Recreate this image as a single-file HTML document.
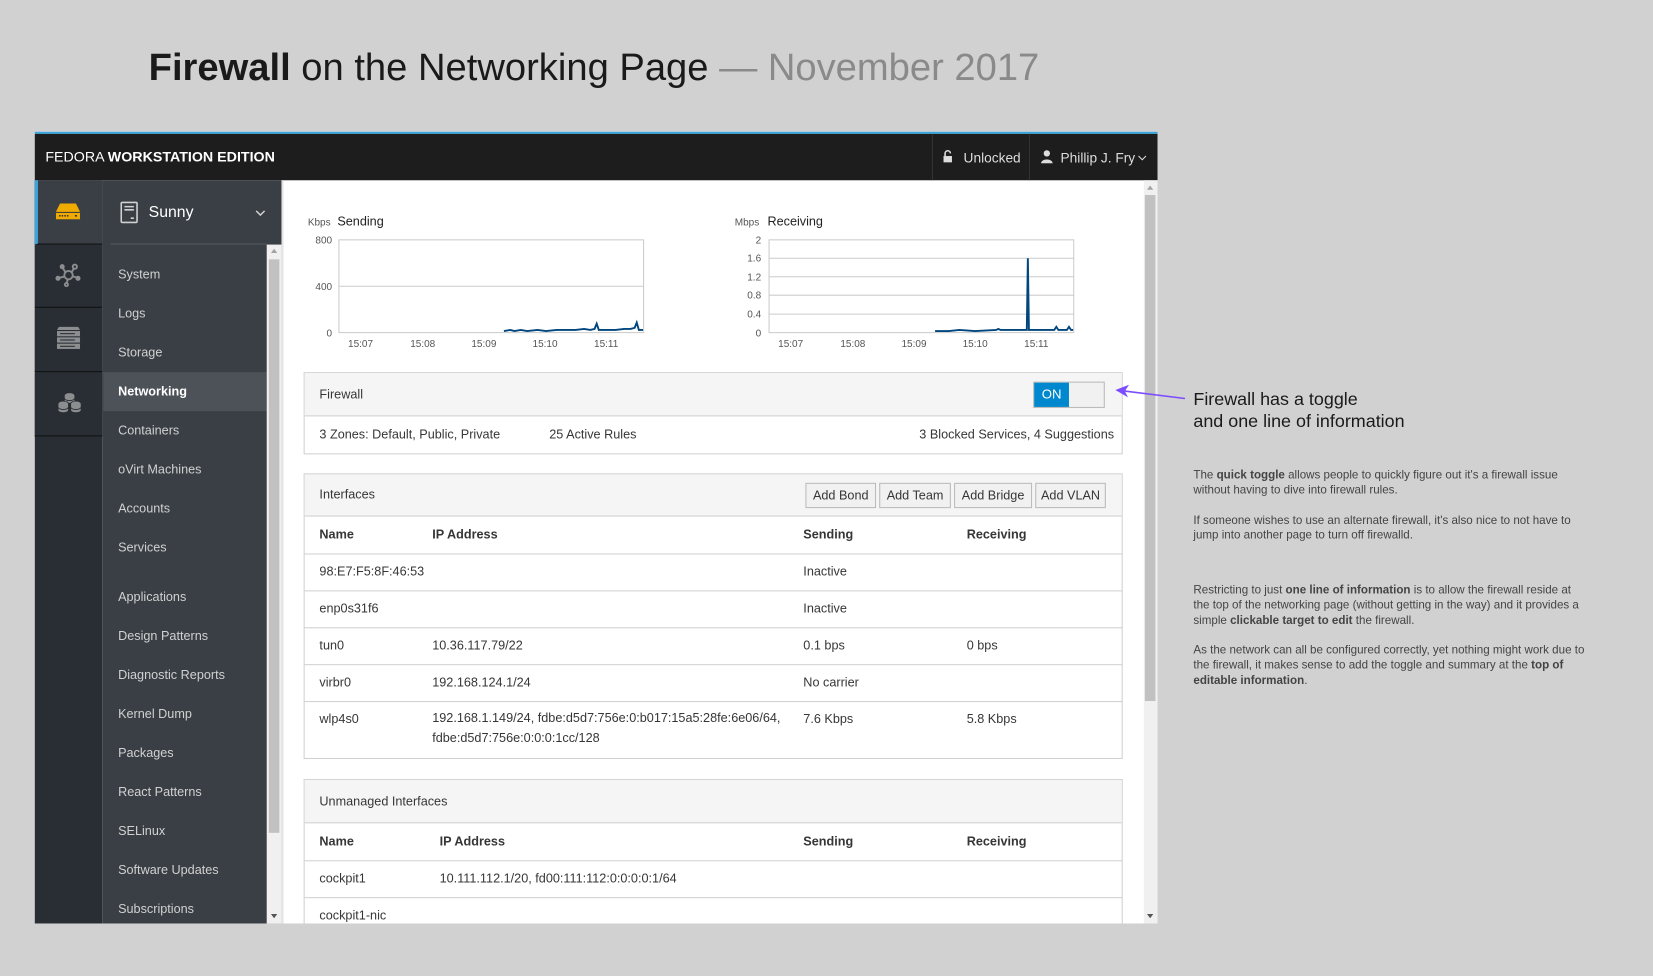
<!DOCTYPE html>
<html><head><meta charset="utf-8"><style>
*{box-sizing:border-box;margin:0;padding:0}
html,body{width:1653px;height:976px;overflow:hidden;background:#d1d1d1;font-family:"Liberation Sans",sans-serif}
#w{position:absolute;left:0;top:0;width:1568px;height:926px;transform:scale(1.05421);transform-origin:0 0}
.a{position:absolute}
.t{position:absolute;font-size:12px;color:#363636;white-space:nowrap}
.nav{position:absolute;left:112px;font-size:12px;color:#d1d1d1}
.ico{position:absolute;left:33px;width:64px;height:60px;background:#292e34;border-bottom:1px solid #111}
.row{position:absolute;left:288px;width:777px;border-top:1px solid #d1d1d1}
.btn{position:absolute;top:458px;height:24px;border:1px solid #bbb;background:#f1f1f1;font-size:12px;color:#363636;text-align:center;line-height:22px}
.p{font-size:11px;color:#444;line-height:14.3px;margin-bottom:14px}
</style></head><body><div id="w">
<div class="a" style="left:141px;top:43px;font-size:36.2px;color:#1a1a1a;white-space:nowrap"><b>Firewall</b> on the Networking Page <span style="color:#8a8a8a">— November 2017</span></div>

<div class="a" style="left:33px;top:125px;width:1065px;height:751px;background:#fff;overflow:hidden"></div>
<div class="a" style="left:33px;top:125px;width:1065px;height:2px;background:#39a5dc"></div>
<div class="a" style="left:33px;top:127px;width:1065px;height:44px;background:#1d1d1d"></div>
<div class="a" style="left:43px;top:141px;font-size:13.5px;color:#fff;white-space:nowrap">FEDORA <b>WORKSTATION EDITION</b></div>
<div class="a" style="left:884px;top:127px;width:1px;height:44px;background:#333"></div>
<div class="a" style="left:976px;top:127px;width:1px;height:44px;background:#333"></div>
<svg class="a" style="left:894px;top:142px" width="10" height="13"><rect x="1" y="6" width="8" height="6" fill="#ddd"/><path d="M2.5 6V3.5a2.5 2.5 0 0 1 5 0" stroke="#ddd" stroke-width="1.5" fill="none"/></svg>
<div class="a" style="left:914px;top:142px;font-size:13px;color:#ddd">Unlocked</div>
<svg class="a" style="left:987px;top:142px" width="12" height="13"><circle cx="6" cy="3.5" r="3" fill="#ddd"/><path d="M0.5 13c0-5 11-5 11 0z" fill="#ddd"/></svg>
<div class="a" style="left:1006px;top:142px;font-size:13px;color:#ddd">Phillip J. Fry</div>
<svg class="a" style="left:1079px;top:147px" width="9" height="6"><path d="M1 1l3.5 3.5L8 1" stroke="#ddd" fill="none"/></svg>

<div class="a" style="left:33px;top:171px;width:64px;height:705px;background:#292e34"></div>
<div class="ico" style="top:171px;background:#393f44;border-left:3px solid #39a5dc;height:61px"></div>
<svg class="a" style="left:53px;top:193px" width="23" height="16"><path d="M4 0h15l4 8H0z" fill="#f0ab00"/><rect x="0" y="9" width="23" height="6" fill="#f0ab00"/><g fill="#292e34"><rect x="3" y="11" width="1.4" height="1.4"/><rect x="5.5" y="11" width="1.4" height="1.4"/><rect x="8" y="11" width="1.4" height="1.4"/><rect x="10.5" y="11" width="1.4" height="1.4"/><rect x="18" y="11" width="2" height="1.4"/></g></svg>
<div class="ico" style="top:232px"></div>
<svg class="a" style="left:52px;top:249px" width="26" height="24" fill="none" stroke="#8b8d8f" stroke-width="1.8"><circle cx="13" cy="12" r="4"/><circle cx="19" cy="4" r="2"/><circle cx="7" cy="4" r="1.5" fill="#8b8d8f"/><circle cx="3" cy="15" r="1.5" fill="#8b8d8f"/><circle cx="22" cy="15" r="1.5" fill="#8b8d8f"/><circle cx="11" cy="21" r="1.5"/><path d="M16 9l2-3M10 9L8 6M9 13.5l-5 1M17 13l4 1.5M12 16l-0.5 3.5"/></svg>
<div class="ico" style="top:293px"></div>
<svg class="a" style="left:54px;top:310px" width="22" height="22"><path d="M2 0h18l2 3H0z" fill="#8b8d8f"/><g fill="#8b8d8f"><rect y="4" width="22" height="5"/><rect y="10" width="22" height="5"/><rect y="16" width="22" height="5"/></g><g fill="#292e34"><rect x="3" y="6" width="14" height="1"/><rect x="3" y="12" width="14" height="1"/><rect x="3" y="18" width="14" height="1"/></g></svg>
<div class="ico" style="top:354px"></div>
<svg class="a" style="left:53px;top:372px" width="26" height="22" fill="#8b8d8f" stroke="#292e34" stroke-width="0.8"><path d="M8 3a5 2.5 0 0 1 10 0v5a5 2.5 0 0 1-10 0z"/><path d="M2 11a5 2.5 0 0 1 10 0v6a5 2.5 0 0 1-10 0z"/><path d="M14 11a5 2.5 0 0 1 10 0v6a5 2.5 0 0 1-10 0z"/><path d="M8 5.5a5 2.5 0 0 0 10 0M2 14a5 2.5 0 0 0 10 0M14 14a5 2.5 0 0 0 10 0" fill="none"/></svg>

<div class="a" style="left:97px;top:171px;width:171px;height:705px;background:#393f44"></div>
<svg class="a" style="left:114px;top:191px" width="18" height="22" fill="none" stroke="#d1d1d1" stroke-width="1.5"><rect x="1" y="1" width="15" height="19" rx="1"/><path d="M4 5h9M4 8h9M10 16h3"/></svg>
<div class="a" style="left:141px;top:193px;font-size:15px;color:#fff">Sunny</div>
<svg class="a" style="left:242px;top:199px" width="10" height="7"><path d="M1 1l4 4 4-4" stroke="#d1d1d1" stroke-width="1.4" fill="none"/></svg>
<div class="a" style="left:105px;top:231px;width:148px;height:1px;background:#555a5f"></div>
<div class="a" style="left:98px;top:353px;width:155px;height:37px;background:#4d5258"></div>
<div class="nav" style="top:253px">System</div>
<div class="nav" style="top:290px">Logs</div>
<div class="nav" style="top:327px">Storage</div>
<div class="nav" style="top:364px;color:#fff;font-weight:bold">Networking</div>
<div class="nav" style="top:401px">Containers</div>
<div class="nav" style="top:438px">oVirt Machines</div>
<div class="nav" style="top:475px">Accounts</div>
<div class="nav" style="top:512px">Services</div>
<div class="nav" style="top:559px">Applications</div>
<div class="nav" style="top:596px">Design Patterns</div>
<div class="nav" style="top:633px">Diagnostic Reports</div>
<div class="nav" style="top:670px">Kernel Dump</div>
<div class="nav" style="top:707px">Packages</div>
<div class="nav" style="top:744px">React Patterns</div>
<div class="nav" style="top:781px">SELinux</div>
<div class="nav" style="top:818px">Software Updates</div>
<div class="nav" style="top:855px">Subscriptions</div>
<div class="a" style="left:253px;top:232px;width:14px;height:644px;background:#f0f0f0"></div>
<div class="a" style="left:255px;top:246px;width:10px;height:544px;background:#c1c1c1"></div>
<div class="a" style="left:257px;top:236px;width:0;height:0;border:3px solid transparent;border-bottom:4px solid #a3a3a3;border-top:0"></div>
<div class="a" style="left:257px;top:867px;width:0;height:0;border:3px solid transparent;border-top:4px solid #555;border-bottom:0"></div>
<div class="a" style="left:267px;top:171px;width:2px;height:705px;background:#e5e5e5"></div>

<div class="a" style="left:1085px;top:171px;width:13px;height:705px;background:#f0f0f0"></div>
<div class="a" style="left:1086px;top:185px;width:10px;height:480px;background:#c1c1c1"></div>
<div class="a" style="left:1088px;top:176px;border:3px solid transparent;border-bottom:4px solid #a3a3a3;border-top:0"></div>
<div class="a" style="left:1088px;top:867px;border:3px solid transparent;border-top:4px solid #555;border-bottom:0"></div>

<svg class="a" style="left:280px;top:195px" width="800" height="145" font-family="Liberation Sans" font-size="9.5" fill="#555">
<text x="12" y="19" font-size="9.5">Kbps</text><text x="40" y="19" font-size="12" fill="#222">Sending</text>
<rect x="41.5" y="32.5" width="289" height="88" fill="none" stroke="#ccc"/>
<line x1="41" y1="76.5" x2="331" y2="76.5" stroke="#ccc"/>
<text x="35" y="36" text-anchor="end">800</text><text x="35" y="80" text-anchor="end">400</text><text x="35" y="124" text-anchor="end">0</text>
<g text-anchor="middle"><text x="62" y="134">15:07</text><text x="121" y="134">15:08</text><text x="179" y="134">15:09</text><text x="237" y="134">15:10</text><text x="295" y="134">15:11</text></g>
<path d="M198 119L204 118L208 119L214 118L220 119L230 118L238 119L248 118L256 118L266 118L274 117L280 118L284 117L286 112L288 118L294 118L304 118L312 117L318 117L322 116L324 111L326 118L330 118" stroke="#00467f" stroke-width="1.8" fill="none"/>
<text x="417" y="19">Mbps</text><text x="448" y="19" font-size="12" fill="#222">Receiving</text>
<rect x="449.5" y="32.5" width="289" height="88" fill="none" stroke="#ccc"/>
<g stroke="#ccc"><line x1="449" y1="50" x2="739" y2="50"/><line x1="449" y1="67.5" x2="739" y2="67.5"/><line x1="449" y1="85" x2="739" y2="85"/><line x1="449" y1="103" x2="739" y2="103"/></g>
<g text-anchor="end"><text x="442" y="36">2</text><text x="442" y="53">1.6</text><text x="442" y="71">1.2</text><text x="442" y="88">0.8</text><text x="442" y="106">0.4</text><text x="442" y="124">0</text></g>
<g text-anchor="middle"><text x="470" y="134">15:07</text><text x="529" y="134">15:08</text><text x="587" y="134">15:09</text><text x="645" y="134">15:10</text><text x="703" y="134">15:11</text></g>
<path d="M607 119L620 119L630 118L645 119L665 118L667 117L669 118L690 118L694 118L695 50L696 118L705 118L715 118L720 118L722 115L724 118L732 118L734 115L736 118L738 118" stroke="#00467f" stroke-width="1.8" fill="none"/>
</svg>

<div class="a" style="left:288px;top:353px;width:777px;height:78px;border:1px solid #d1d1d1;background:#fff"></div>
<div class="a" style="left:289px;top:354px;width:775px;height:41px;background:#f5f5f5;border-bottom:1px solid #d1d1d1"></div>
<div class="t" style="left:303px;top:367px">Firewall</div>
<div class="a" style="left:980px;top:362px;width:68px;height:25px;border:1px solid #bbb;background:#f1f1f1"></div>
<div class="a" style="left:981px;top:363px;width:33px;height:23px;background:#0088ce;color:#fff;font-size:12.5px;text-align:center;line-height:23px">ON</div>
<div class="t" style="left:303px;top:405px">3 Zones: Default, Public, Private</div>
<div class="t" style="left:521px;top:405px">25 Active Rules</div>
<div class="t" style="left:872px;top:405px">3 Blocked Services, 4 Suggestions</div>

<div class="a" style="left:288px;top:449px;width:777px;height:271px;border:1px solid #d1d1d1;background:#fff"></div>
<div class="a" style="left:289px;top:450px;width:775px;height:40px;background:#f5f5f5;border-bottom:1px solid #d1d1d1"></div>
<div class="t" style="left:303px;top:462px">Interfaces</div>
<div class="btn" style="left:764px;width:67px">Add Bond</div>
<div class="btn" style="left:834px;width:68px">Add Team</div>
<div class="btn" style="left:905px;width:74px">Add Bridge</div>
<div class="btn" style="left:982px;width:67px">Add VLAN</div>
<div class="t" style="left:303px;top:500px;font-weight:bold;color:#363636">Name</div>
<div class="t" style="left:410px;top:500px;font-weight:bold">IP Address</div>
<div class="t" style="left:762px;top:500px;font-weight:bold">Sending</div>
<div class="t" style="left:917px;top:500px;font-weight:bold">Receiving</div>
<div class="row" style="top:525px"></div><div class="row" style="top:560px"></div><div class="row" style="top:595px"></div><div class="row" style="top:630px"></div><div class="row" style="top:665px"></div>
<div class="t" style="left:303px;top:535px">98:E7:F5:8F:46:53</div><div class="t" style="left:762px;top:535px">Inactive</div>
<div class="t" style="left:303px;top:570px">enp0s31f6</div><div class="t" style="left:762px;top:570px">Inactive</div>
<div class="t" style="left:303px;top:605px">tun0</div><div class="t" style="left:410px;top:605px">10.36.117.79/22</div><div class="t" style="left:762px;top:605px">0.1 bps</div><div class="t" style="left:917px;top:605px">0 bps</div>
<div class="t" style="left:303px;top:640px">virbr0</div><div class="t" style="left:410px;top:640px">192.168.124.1/24</div><div class="t" style="left:762px;top:640px">No carrier</div>
<div class="t" style="left:303px;top:675px">wlp4s0</div><div class="t" style="left:410px;top:675px;line-height:19px;margin-top:-3px">192.168.1.149/24, fdbe:d5d7:756e:0:b017:15a5:28fe:6e06/64,<br>fdbe:d5d7:756e:0:0:0:1cc/128</div><div class="t" style="left:762px;top:675px">7.6 Kbps</div><div class="t" style="left:917px;top:675px">5.8 Kbps</div>

<div class="a" style="left:288px;top:739px;width:777px;height:137px;border:1px solid #d1d1d1;border-bottom:0;background:#fff"></div>
<div class="a" style="left:289px;top:740px;width:775px;height:41px;background:#f5f5f5;border-bottom:1px solid #d1d1d1"></div>
<div class="t" style="left:303px;top:753px">Unmanaged Interfaces</div>
<div class="t" style="left:303px;top:791px;font-weight:bold">Name</div>
<div class="t" style="left:417px;top:791px;font-weight:bold">IP Address</div>
<div class="t" style="left:762px;top:791px;font-weight:bold">Sending</div>
<div class="t" style="left:917px;top:791px;font-weight:bold">Receiving</div>
<div class="row" style="top:816px"></div><div class="row" style="top:851px"></div>
<div class="t" style="left:303px;top:826px">cockpit1</div><div class="t" style="left:417px;top:826px">10.111.112.1/20, fd00:111:112:0:0:0:0:1/64</div>
<div class="t" style="left:303px;top:861px">cockpit1-nic</div>
<div class="a" style="left:0;top:876px;width:1568px;height:50px;background:#d1d1d1"></div>

<svg class="a" style="left:1055px;top:362px" width="72" height="20"><path d="M69 16L8 8.5" stroke="#7c4dff" stroke-width="1.5"/><path d="M3 8l13-5-4 6 3 6z" fill="#7c4dff"/></svg>
<div class="a" style="left:1132px;top:368px;font-size:17px;line-height:21px;color:#1a1a1a">Firewall has a toggle<br>and one line of information</div>
<div class="a" style="left:1132px;top:444px;width:376px">
<p class="p">The <b>quick toggle</b> allows people to quickly figure out it's a firewall issue without having to dive into firewall rules.</p>
<p class="p">If someone wishes to use an alternate firewall, it's also nice to not have to jump into another page to turn off firewalld.</p>
<p class="p" style="margin-top:38px">Restricting to just <b>one line of information</b> is to allow the firewall reside at the top of the networking page (without getting in the way) and it provides a simple <b>clickable target to edit</b> the firewall.</p>
<p class="p">As the network can all be configured correctly, yet nothing might work due to the firewall, it makes sense to add the toggle and summary at the <b>top of editable information</b>.</p>
</div>
</div></body></html>
